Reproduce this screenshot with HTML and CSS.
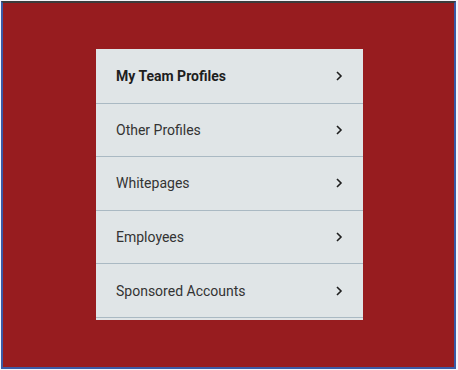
FILE: index.html
```html
<!DOCTYPE html>
<html>
<head>
  <meta charset="UTF-8">
  <title>Profiles</title>
  <link rel="stylesheet" href="styles.css">
</head>
<body>
  <div class="frame">
    <ul class="menu">
      <li class="menu-item active">
        <span>My Team Profiles</span>
        <svg class="chevron" width="8" height="12" viewBox="0 0 8 12"><path d="M2 2 L6 6 L2 10" fill="none" stroke="#1f1f1f" stroke-width="1.6"/></svg>
      </li>
      <li class="menu-item">
        <span>Other Profiles</span>
        <svg class="chevron" width="8" height="12" viewBox="0 0 8 12"><path d="M2 2 L6 6 L2 10" fill="none" stroke="#1f1f1f" stroke-width="1.6"/></svg>
      </li>
      <li class="menu-item">
        <span>Whitepages</span>
        <svg class="chevron" width="8" height="12" viewBox="0 0 8 12"><path d="M2 2 L6 6 L2 10" fill="none" stroke="#1f1f1f" stroke-width="1.6"/></svg>
      </li>
      <li class="menu-item">
        <span>Employees</span>
        <svg class="chevron" width="8" height="12" viewBox="0 0 8 12"><path d="M2 2 L6 6 L2 10" fill="none" stroke="#1f1f1f" stroke-width="1.6"/></svg>
      </li>
      <li class="menu-item">
        <span>Sponsored Accounts</span>
        <svg class="chevron" width="8" height="12" viewBox="0 0 8 12"><path d="M2 2 L6 6 L2 10" fill="none" stroke="#1f1f1f" stroke-width="1.6"/></svg>
      </li>
    </ul>
  </div>
</body>
</html>
```

FILE: styles.css
```css
body {
  margin: 0;
  background-color: #f4f6fa;
  font-family: Roboto, "Liberation Sans", sans-serif;
}

.frame {
  margin: 1px 2px 1px 1px;
  height: 318px;
  border: 2px solid #3b5aa5;
  border-top-color: #3c3c3c;
  background-color: #971c1f;
  padding: 46px 0 0 93px;
}

.menu {
  list-style: none;
  margin: 0;
  padding: 1px 0 2px 0;
  width: 267px;
  background-color: #e0e5e7;
}

.menu-item {
  display: flex;
  align-items: center;
  justify-content: space-between;
  height: 52.6px;
  padding: 0 20px 0 20px;
  border-bottom: 1px solid #aab9c3;
  font-size: 14px;
  color: #333333;
}

.menu-item.active {
  font-weight: bold;
  color: #1e1e1e;
}

.chevron {
  display: block;
}
```
